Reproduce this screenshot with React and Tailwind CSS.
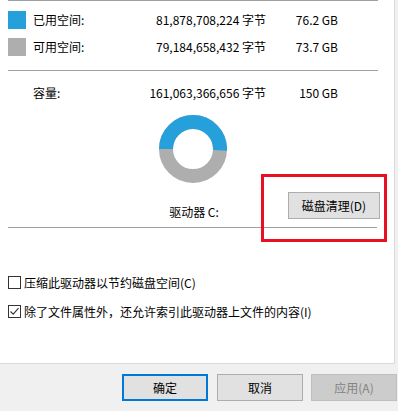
import React from 'react'

const BLUE = '#26a0da'
const GRAY = '#aeaeae'

// ring chart of used vs. free space (used fraction 76.2 / 150)
function UsageRing({ used = 0.508 }) {
  const r = 27
  const c = 34
  const sweep = used * 2 * Math.PI
  const start = Math.PI
  const end = start + sweep
  const x1 = c + r * Math.cos(start)
  const y1 = c + r * Math.sin(start)
  const x2 = c + r * Math.cos(end)
  const y2 = c + r * Math.sin(end)
  const large = sweep > Math.PI ? 1 : 0
  return (
    <svg width="68" height="68" viewBox="0 0 68 68">
      <circle cx={c} cy={c} r={r} fill="none" stroke={GRAY} strokeWidth="14" />
      <path
        d={`M ${x1} ${y1} A ${r} ${r} 0 ${large} 1 ${x2} ${y2}`}
        fill="none"
        stroke={BLUE}
        strokeWidth="14"
      />
    </svg>
  )
}

function Checkbox({ checked, label }) {
  return (
    <div className="flex h-[13px] items-center gap-[3px]">
      <span className="flex h-[13px] w-[13px] shrink-0 items-center justify-center border border-[#333333] bg-white">
        {checked && (
          <svg width="11" height="11" viewBox="0 0 11 11">
            <path d="M1.5 5.5 L4.2 8.2 L9.5 2.2" fill="none" stroke="#333333" strokeWidth="1.1" />
          </svg>
        )}
      </span>
      <span className="whitespace-nowrap leading-[16px]">{label}</span>
    </div>
  )
}

function SpaceRow({ swatch, label, bytes, size }) {
  return (
    <div className="grid h-[18px] grid-cols-[25px_80px_153px_72px] items-center">
      <span className={`h-[18px] w-[18px] ${swatch}`} />
      <span className="whitespace-nowrap">{label}</span>
      <span className="whitespace-nowrap text-right">{bytes}</span>
      <span className="whitespace-nowrap text-right">{size}</span>
    </div>
  )
}

function Btn({ children, primary, disabled, className = '' }) {
  return (
    <button
      type="button"
      className={
        'flex h-[27px] w-[86px] items-center justify-center text-[12px] ' +
        (primary
          ? 'border-2 border-[#0078d7] bg-[#e1e1e1] text-black '
          : disabled
            ? 'border border-[#bfbfbf] bg-[#cccccc] text-[#838383] '
            : 'border border-[#adadad] bg-[#e1e1e1] text-black ') +
        className
      }
    >
      {children}
    </button>
  )
}

export default function App() {
  return (
    <div className="flex h-[411px] w-[398px] flex-col overflow-hidden bg-[#f0f0f0] font-['Noto_Sans_CJK_SC',sans-serif] text-[12px] text-black">
      {/* white property page */}
      <div className="relative flex h-[364px] w-[395px] flex-col border-r border-b border-[#d9d9d9] bg-white pl-2">
        <div className="h-px w-[370px] bg-[#a0a0a0]" />

        <div className="mt-[10px]">
          <SpaceRow swatch="bg-[#26a0da]" label="已用空间:" bytes="81,878,708,224 字节" size="76.2 GB" />
        </div>
        <div className="mt-[9px]">
          <SpaceRow swatch="bg-[#aeaeae]" label="可用空间:" bytes="79,184,658,432 字节" size="73.7 GB" />
        </div>

        <div className="mt-[14px] h-px w-[370px] bg-[#a0a0a0]" />

        <div className="mt-[13px] grid h-[16px] grid-cols-[25px_80px_153px_72px] items-center">
          <span />
          <span>容量:</span>
          <span className="whitespace-nowrap text-right">161,063,366,656 字节</span>
          <span className="whitespace-nowrap text-right">150 GB</span>
        </div>

        <div className="mt-[15px] flex w-[370px] justify-center">
          <UsageRing />
        </div>

        <div className="mt-[9px] grid w-[372px] grid-cols-[1fr_auto_1fr] items-end">
          <span />
          <span className="mb-[-1px] whitespace-nowrap leading-[16px]">驱动器 C:</span>
          <button
            type="button"
            className="flex h-[27px] w-[92px] items-center justify-center justify-self-end border border-[#adadad] bg-[#e1e1e1] text-[12px]"
          >
            磁盘清理(D)
          </button>
        </div>

        <div className="mt-[8px] h-px w-[369px] bg-[#a0a0a0]" />

        <div className="mt-[48px]">
          <Checkbox label="压缩此驱动器以节约磁盘空间(C)" />
        </div>
        <div className="mt-[16px]">
          <Checkbox checked label="除了文件属性外，还允许索引此驱动器上文件的内容(I)" />
        </div>

        {/* red annotation frame around the cleanup button */}
        <div className="pointer-events-none absolute left-[261px] top-[174px] h-[68px] w-[126px] border-[3px] border-[#e81123]" />
      </div>

      {/* dialog buttons */}
      <div className="mt-[10px] flex pl-[122px]">
        <Btn primary>确定</Btn>
        <Btn className="ml-[9px]">取消</Btn>
        <Btn disabled className="ml-[8px]">应用(A)</Btn>
      </div>
    </div>
  )
}
